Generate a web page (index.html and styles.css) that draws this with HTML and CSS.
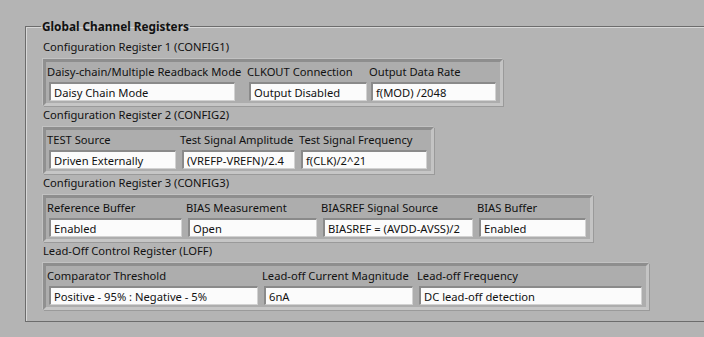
FILE: index.html
```html
<!DOCTYPE html>
<html lang="en">
<head>
  <meta charset="UTF-8" />
  <title>Global Channel Registers</title>
  <link rel="stylesheet" href="styles.css">
</head>
<body>

  <fieldset class="group">
    <legend>Global Channel Registers</legend>

    <div class="reg-title">Configuration Register 1 (CONFIG1)</div>
    <div class="cluster cfg1">
      <div class="field">
        <label>Daisy-chain/Multiple Readback Mode</label>
        <div class="value">Daisy Chain Mode</div>
      </div>
      <div class="field">
        <label>CLKOUT Connection</label>
        <div class="value">Output Disabled</div>
      </div>
      <div class="field">
        <label>Output Data Rate</label>
        <div class="value">f(MOD) /2048</div>
      </div>
    </div>

    <div class="reg-title">Configuration Register 2 (CONFIG2)</div>
    <div class="cluster cfg2">
      <div class="field">
        <label>TEST Source</label>
        <div class="value">Driven Externally</div>
      </div>
      <div class="field">
        <label>Test Signal Amplitude</label>
        <div class="value">(VREFP-VREFN)/2.4</div>
      </div>
      <div class="field">
        <label>Test Signal Frequency</label>
        <div class="value">f(CLK)/2^21</div>
      </div>
    </div>

    <div class="reg-title">Configuration Register 3 (CONFIG3)</div>
    <div class="cluster cfg3">
      <div class="field">
        <label>Reference Buffer</label>
        <div class="value">Enabled</div>
      </div>
      <div class="field">
        <label>BIAS Measurement</label>
        <div class="value">Open</div>
      </div>
      <div class="field">
        <label>BIASREF Signal Source</label>
        <div class="value">BIASREF = (AVDD-AVSS)/2</div>
      </div>
      <div class="field">
        <label>BIAS Buffer</label>
        <div class="value">Enabled</div>
      </div>
    </div>

    <div class="reg-title">Lead-Off Control Register (LOFF)</div>
    <div class="cluster loff">
      <div class="field">
        <label>Comparator Threshold</label>
        <div class="value">Positive - 95% : Negative - 5%</div>
      </div>
      <div class="field">
        <label>Lead-off Current Magnitude</label>
        <div class="value">6nA</div>
      </div>
      <div class="field">
        <label>Lead-off Frequency</label>
        <div class="value">DC lead-off detection</div>
      </div>
    </div>
  </fieldset>

</body>
</html>
```

FILE: styles.css
```css
body {
  margin: 0;
  background: #b4b4b4;
  font-family: "Noto Sans", sans-serif;
  font-size: 11.2px;
  color: #111;
  overflow: hidden;
}
.group {
  margin: 18px 0 0 25px;
  width: calc(100% - 25px);
  height: 304px;
  padding: 5px 0 0 17px;
  border: 1px solid #6c6c6c;
  border-right: none;
  box-shadow: 0 1px 0 #d8d8d8, inset 1px 1px 0 #d8d8d8;
  box-sizing: border-box;
}
.group legend {
  font-weight: bold;
  font-size: 11.8px;
  padding: 0 1px;
  margin-left: -2px;
}
.reg-title {
  height: 16px;
  line-height: 16px;
  margin-bottom: 4px;
}
.cluster {
  display: grid;
  column-gap: 6px;
  justify-content: start;
  align-items: end;
  padding: 0 4px 2px 3px;
  margin-bottom: 1px;
  background: #adadad;
  border: 3px solid;
  border-color: #8e8e8e #c4c4c4 #c6c6c6 #909090;
  box-shadow: 1px 1px 0 #9a9a9a, -1px -1px 0 #c2c2c2;
  width: max-content;
}
.field label {
  display: block;
  white-space: nowrap;
  height: 20px;
  line-height: 20px;
  margin-left: -2px;
}
.value {
  height: 19px;
  line-height: 18px;
  padding-left: 3px;
  background: #fbfbfb;
  border-top: 2px solid #8a8a8a;
  border-left: 2px solid #8a8a8a;
  border-right: 1px solid #d2d2d2;
  border-bottom: 1px solid #d2d2d2;
  box-sizing: border-box;
  white-space: nowrap;
  overflow: hidden;
}
.cfg1 {
  grid-template-columns: 196px 118px 125px;
  column-gap: 4px;
}
.cfg1 .field:first-child .value {
  width: 186px;
}
.cfg2 {
  grid-template-columns: 127px 113px 126px;
}
.cfg3 {
  grid-template-columns: 133px 129px 150px 107px;
}
.loff {
  grid-template-columns: 209px 149px 223px;
}
```
